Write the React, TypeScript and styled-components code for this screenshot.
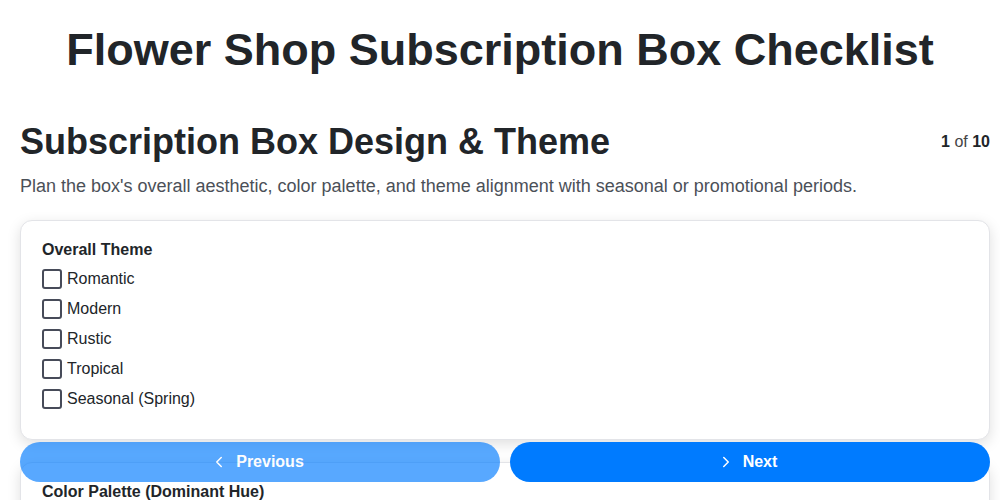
import styled, { createGlobalStyle } from "styled-components";
import { ChevronLeft, ChevronRight } from "lucide-react";

const GlobalStyle = createGlobalStyle`
  body {
    margin: 0;
    background: #ffffff;
    font-family: "Liberation Sans", Arial, sans-serif;
    color: #212529;
  }
`;

const Title = styled.h1`
  margin: 0;
  padding: 23px 0 43px;
  text-align: center;
  font-size: 45px;
  line-height: 54px;
  font-weight: 700;
  color: #212529;
`;

const Page = styled.div`
  padding: 0 10px 0 20px;
  max-width: 970px;
`;

const SectionHead = styled.div`
  display: flex;
  justify-content: space-between;
  align-items: center;
`;

const SectionTitle = styled.h2`
  margin: 0;
  font-size: 36px;
  line-height: 44px;
  font-weight: 700;
  color: #212529;
`;

const Counter = styled.span`
  font-size: 16px;
  color: #444;
  b {
    color: #212529;
  }
`;

const Description = styled.p`
  margin: 11px 0 23px;
  font-size: 18px;
  line-height: 22px;
  color: #4b5058;
`;

const Card = styled.div`
  background: #fff;
  border: 1px solid #e3e4e8;
  border-radius: 12px;
  box-shadow: 0 4px 14px rgba(0, 0, 0, 0.13);
  padding: 19px 21px 25px;
`;

const GroupLabel = styled.div`
  font-weight: 700;
  font-size: 16px;
  line-height: 20px;
  margin-bottom: 4px;
  color: #212529;
`;

const Option = styled.label`
  display: flex;
  align-items: center;
  gap: 5px;
  height: 30px;
  font-size: 16px;
  color: #212529;
`;

const Box = styled.span`
  box-sizing: border-box;
  width: 20px;
  height: 20px;
  border: 2px solid #474b59;
  border-radius: 3px;
  background: #fff;
`;

const Nav = styled.div`
  position: sticky;
  bottom: 18px;
  display: flex;
  gap: 10px;
  margin: 2px 0 -20px;
  z-index: 2;
`;

const NavButton = styled.button<{ $muted?: boolean }>`
  flex: 1;
  height: 40px;
  border: none;
  border-radius: 20px;
  background: #007bff;
  opacity: ${(p) => (p.$muted ? 0.65 : 1)};
  color: #fff;
  font-family: "Liberation Sans", Arial, sans-serif;
  font-weight: 700;
  font-size: 16px;
  display: flex;
  align-items: center;
  justify-content: center;
  gap: 8px;
  cursor: pointer;

  svg {
    margin-left: -6px;
  }
`;

const MoreCards = styled.div`
  display: flex;
  flex-direction: column;
  gap: 22px;
  padding-bottom: 30px;
`;

const sections = [
  {
    label: "Overall Theme",
    options: ["Romantic", "Modern", "Rustic", "Tropical", "Seasonal (Spring)"],
  },
  {
    label: "Color Palette (Dominant Hue)",
    options: ["Pastels", "Bright & Bold", "Neutrals", "Monochrome", "Jewel Tones"],
  },
  {
    label: "Packaging Style",
    options: ["Kraft Box", "Hat Box", "Wooden Crate", "Eco Wrap"],
  },
];

type Section = (typeof sections)[number];

const Group = ({ section }: { section: Section }) => (
  <Card>
    <GroupLabel>{section.label}</GroupLabel>
    {section.options.map((o) => (
      <Option key={o}>
        <Box />
        {o}
      </Option>
    ))}
  </Card>
);

export default function App() {
  const [first, ...rest] = sections;
  return (
    <>
      <GlobalStyle />
      <Title>Flower Shop Subscription Box Checklist</Title>
      <Page>
        <SectionHead>
          <SectionTitle>Subscription Box Design &amp; Theme</SectionTitle>
          <Counter>
            <b>1</b> of <b>10</b>
          </Counter>
        </SectionHead>
        <Description>
          Plan the box's overall aesthetic, color palette, and theme alignment
          with seasonal or promotional periods.
        </Description>
        <Group section={first} />
        <Nav>
          <NavButton $muted>
            <ChevronLeft size={18} strokeWidth={2} />
            Previous
          </NavButton>
          <NavButton>
            <ChevronRight size={18} strokeWidth={2} />
            Next
          </NavButton>
        </Nav>
        <MoreCards>
          {rest.map((s) => (
            <Group key={s.label} section={s} />
          ))}
        </MoreCards>
      </Page>
    </>
  );
}
